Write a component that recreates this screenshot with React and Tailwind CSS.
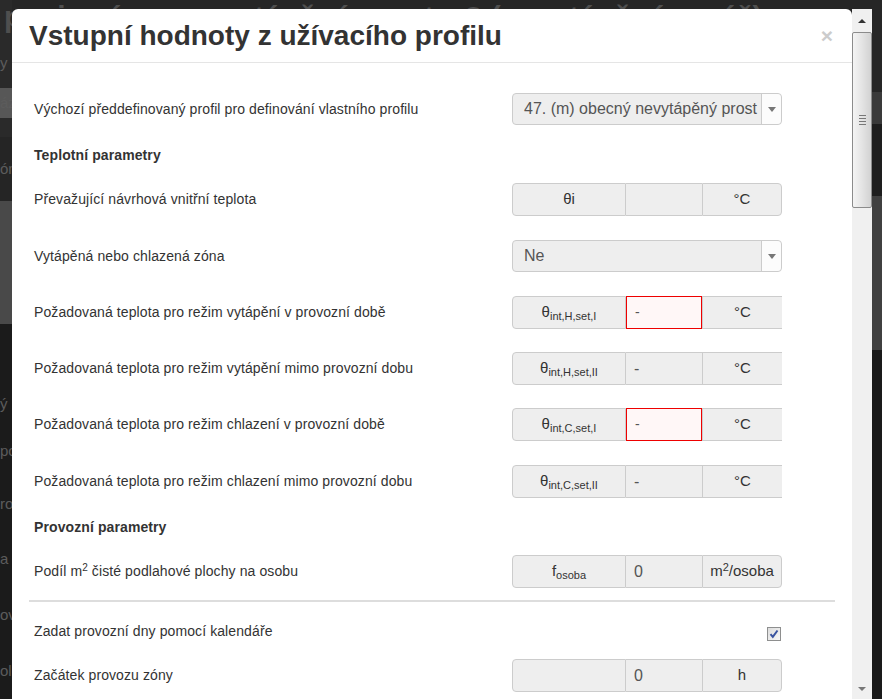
import React from "react";

const Label = ({ children }) => (
  <div className="flex-1 text-[14px] tracking-[0.1px] text-[#333]">{children}</div>
);

// addon | input | addon, like the bootstrap input-group
const InputGroup = ({ sym, value, unit, error, openRight }) => (
  <div className="flex h-[33px] w-[270px] text-[14px]">
    <div className="flex w-[114px] items-center justify-center rounded-l-[4px] border border-[#ccc] bg-[#eee] text-[#333]">
      {sym}
    </div>
    {error ? (
      <div className="flex w-[76px] items-center border border-[#e00] bg-[#fff7f7] pl-[8px] text-[#555]">
        {value}
      </div>
    ) : (
      <div className="flex w-[76px] items-center border-y border-[#ccc] bg-[#eee] pl-[8px] text-[16px] text-[#555]">
        {value}
      </div>
    )}
    {openRight ? (
      <div className="flex w-[80px] items-center justify-center border-y border-l border-[#ccc] bg-[#eee] text-[15px] text-[#333]">
        {unit}
      </div>
    ) : (
      <div className="flex w-[80px] items-center justify-center rounded-r-[4px] border border-[#ccc] bg-[#eee] text-[15px] text-[#333]">
        {unit}
      </div>
    )}
  </div>
);

const Select = ({ text }) => (
  <div className="flex h-[32px] w-[270px] items-center rounded-[4px] border border-[#ccc] bg-[#eee]">
    <div className="flex-1 overflow-hidden whitespace-nowrap pl-[11px] text-[16px] text-[#555]">
      {text}
    </div>
    <div className="flex h-full w-[20px] items-center justify-center rounded-r-[4px] border-l border-[#ccc] bg-[#fcfcfc]">
      <div className="h-0 w-0 border-x-[4px] border-t-[5px] border-x-transparent border-t-[#777]" />
    </div>
  </div>
);

const Theta = ({ sub }) => (
  <span className="text-[15px]">
    θ<sub className="text-[11px]">{sub}</sub>
  </span>
);

const leftBits = [
  { h: "h-[50px]", bg: "bg-[#2a2a2a]", t: "" },
  { h: "h-[30px]", bg: "bg-[#2a2a2a]", t: "y" },
  { h: "h-[10px]", bg: "bg-[#2a2a2a]", t: "" },
  { h: "h-[30px]", bg: "bg-[#575757]", t: "áz" },
  { h: "h-[20px]", bg: "bg-[#2a2a2a]", t: "" },
  { h: "h-[65px]", bg: "bg-[#252525]", t: "ón" },
  { h: "h-[125px]", bg: "bg-[#494949]", t: "" },
  { h: "h-[60px]", bg: "bg-[#1b1b1b]", t: "" },
  { h: "h-[44px]", bg: "bg-[#1b1b1b]", t: "ý" },
  { h: "h-[52px]", bg: "bg-[#1b1b1b]", t: "po" },
  { h: "h-[56px]", bg: "bg-[#1b1b1b]", t: "ro" },
  { h: "h-[57px]", bg: "bg-[#1b1b1b]", t: "a z" },
  { h: "h-[57px]", bg: "bg-[#1b1b1b]", t: "ov" },
  { h: "h-[57px]", bg: "bg-[#1b1b1b]", t: "olc" },
];

export default function App() {
  return (
    <div className="relative h-[699px] w-[882px] overflow-hidden bg-[#1b1b1b] font-['Liberation_Sans',Arial,sans-serif]">
      {/* page behind the dialog */}
      <div className="flex h-full">
        <div className="flex w-[12px] flex-col overflow-hidden">
          {leftBits.map((b, i) => (
            <div
              key={i}
              className={`${b.h} ${b.bg} flex items-center whitespace-nowrap text-[15px] text-[#5c5c5c]`}
            >
              {b.t}
            </div>
          ))}
        </div>
        <div className="flex-1 bg-[#262626]" />
        <div className="flex w-[11px] flex-col">
          <div className="h-[92px] bg-[#262626]" />
          <div className="h-[32px] bg-[#3a3a3a]" />
          <div className="h-[72px] bg-[#1e1e1e]" />
          <div className="h-[154px] bg-[#404040]" />
          <div className="flex-1 bg-[#1a1a1a]" />
        </div>
      </div>
      <div className="absolute left-0 top-[-6px] whitespace-nowrap pl-[4px] text-[30px] font-bold text-[#4f4f4f]">
        penie zóny - nevytápěný prostor? (nevytápěné garáž)
      </div>

      {/* dialog */}
      <div className="absolute left-[12px] top-[9px] flex">
        <div className="h-[700px] w-[840px] overflow-hidden rounded-t-[6px] bg-white">
          <div className="flex h-[54px] items-center justify-between border-b border-[#e5e5e5] pl-[17px] pr-[19px]">
            <h1 className="text-[28px] font-bold text-[#333]">
              Vstupní hodnoty z užívacího profilu
            </h1>
            <span className="text-[21px] font-bold leading-none text-[#ccc]">×</span>
          </div>

          <div className="px-[17px] pt-[30px]">
            <div className="flex h-[32px] items-center pl-[5px] pr-[53px]">
              <Label>Výchozí předdefinovaný profil pro definování vlastního profilu</Label>
              <Select text="47. (m) obecný nevytápěný prost" />
            </div>

            <div className="mt-[20px] h-[20px] pl-[5px] text-[14px] font-bold leading-[20px] tracking-[0.1px] text-[#333]">
              Teplotní parametry
            </div>

            <div className="mt-[18px] flex h-[33px] items-center pl-[5px] pr-[53px]">
              <Label>Převažující návrhová vnitřní teplota</Label>
              <InputGroup sym={<span className="text-[15px]">θi</span>} value="" unit="°C" />
            </div>

            <div className="mt-[24px] flex h-[32px] items-center pl-[5px] pr-[53px]">
              <Label>Vytápěná nebo chlazená zóna</Label>
              <Select text="Ne" />
            </div>

            <div className="mt-[24px] flex h-[33px] items-center pl-[5px] pr-[53px]">
              <Label>Požadovaná teplota pro režim vytápění v provozní době</Label>
              <InputGroup sym={<Theta sub="int,H,set,I" />} value="-" unit="°C" error openRight />
            </div>

            <div className="mt-[23px] flex h-[33px] items-center pl-[5px] pr-[53px]">
              <Label>Požadovaná teplota pro režim vytápění mimo provozní dobu</Label>
              <InputGroup sym={<Theta sub="int,H,set,II" />} value="-" unit="°C" openRight />
            </div>

            <div className="mt-[23px] flex h-[33px] items-center pl-[5px] pr-[53px]">
              <Label>Požadovaná teplota pro režim chlazení v provozní době</Label>
              <InputGroup sym={<Theta sub="int,C,set,I" />} value="-" unit="°C" error openRight />
            </div>

            <div className="mt-[24px] flex h-[33px] items-center pl-[5px] pr-[53px]">
              <Label>Požadovaná teplota pro režim chlazení mimo provozní dobu</Label>
              <InputGroup sym={<Theta sub="int,C,set,II" />} value="-" unit="°C" openRight />
            </div>

            <div className="mt-[19px] h-[20px] pl-[5px] text-[14px] font-bold leading-[20px] tracking-[0.1px] text-[#333]">
              Provozní parametry
            </div>

            <div className="mt-[18px] flex h-[33px] items-center pl-[5px] pr-[53px]">
              <Label>
                Podíl m<sup className="text-[10px]">2</sup> čisté podlahové plochy na osobu
              </Label>
              <InputGroup
                sym={
                  <span className="text-[15px]">
                    f<sub className="text-[11px]">osoba</sub>
                  </span>
                }
                value="0"
                unit={
                  <span>
                    m<sup className="text-[11px]">2</sup>/osoba
                  </span>
                }
              />
            </div>

            <div className="mt-[12px] h-[2px] bg-[#ddd]" />

            <div className="mt-[19px] flex h-[20px] items-center pl-[5px] pr-[54px]">
              <Label>Zadat provozní dny pomocí kalendáře</Label>
              <svg width="14" height="14" viewBox="0 0 14 14" className="mt-[5px]">
                <defs>
                  <linearGradient id="cb" x1="0" y1="0" x2="1" y2="1">
                    <stop offset="0" stopColor="#dcdcdc" />
                    <stop offset="1" stopColor="#f8f8f8" />
                  </linearGradient>
                </defs>
                <rect x="0.5" y="0.5" width="13" height="13" fill="url(#cb)" stroke="#8e8f8f" />
                <path d="M3.5 7.2 L5.8 9.8 L10.5 3.5" fill="none" stroke="#3a54a0" strokeWidth="2" />
              </svg>
            </div>

            <div className="mt-[18px] flex h-[33px] items-center pl-[5px] pr-[53px]">
              <Label>Začátek provozu zóny</Label>
              <InputGroup sym="" value="0" unit="h" />
            </div>
          </div>
        </div>

        {/* scrollbar */}
        <div className="flex h-[690px] w-[20px] flex-col bg-[#f0f0f0]">
          <div className="flex h-[23px] items-center justify-center">
            <div className="h-0 w-0 border-x-[4px] border-b-[4px] border-x-transparent border-b-[#333]" />
          </div>
          <div className="flex h-[176px] items-center justify-center rounded-[2px] border border-[#8b8b8b] bg-gradient-to-r from-[#f4f4f4] via-[#e4e4e4] to-[#d2d2d2]">
            <div className="flex flex-col gap-[2px]">
              <div className="h-[1px] w-[7px] bg-[#777]" />
              <div className="h-[1px] w-[7px] bg-[#777]" />
              <div className="h-[1px] w-[7px] bg-[#777]" />
              <div className="h-[1px] w-[7px] bg-[#777]" />
            </div>
          </div>
          <div className="flex-1" />
          <div className="flex h-[14px] items-start justify-center pt-[2px]">
            <div className="h-0 w-0 border-x-[4px] border-t-[4px] border-x-transparent border-t-[#777]" />
          </div>
        </div>
      </div>
    </div>
  );
}
